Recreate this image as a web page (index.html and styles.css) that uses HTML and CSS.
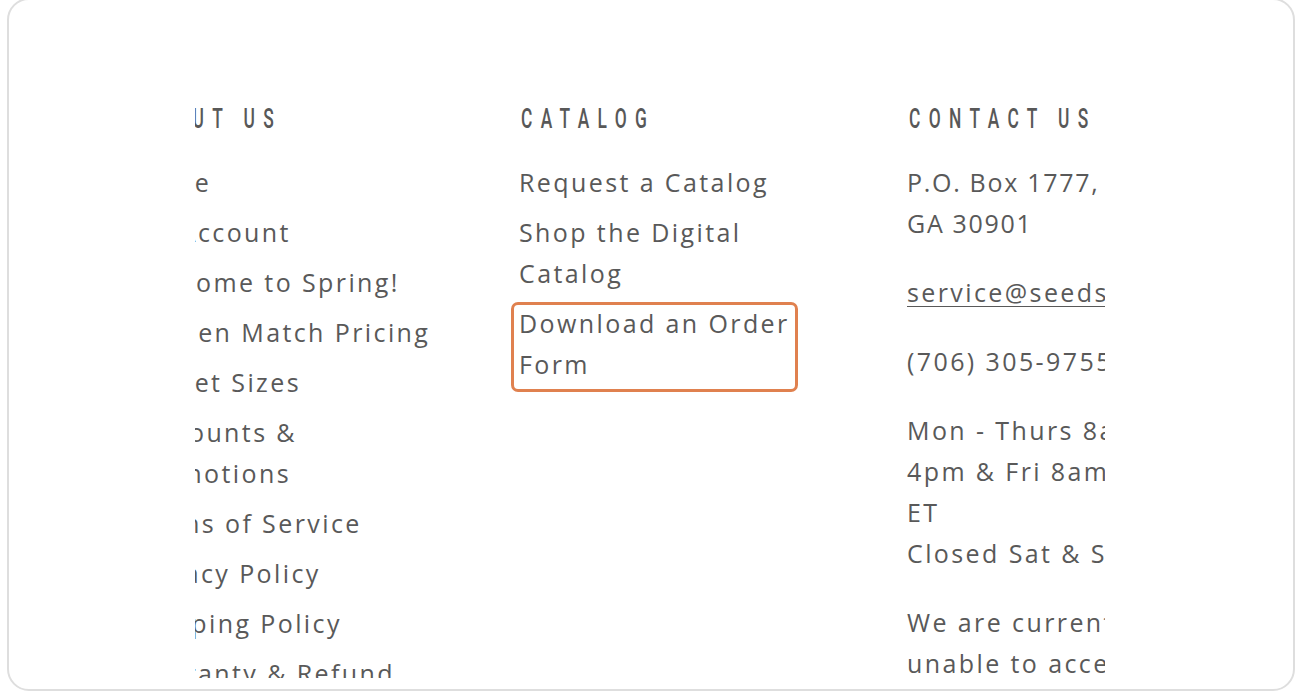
FILE: index.html
```html
<!DOCTYPE html>
<html lang="en">
<head>
    <meta charset="UTF-8">
    <title>Footer</title>
    <link rel="stylesheet" href="styles.css">
</head>
<body>

    <div class="frame">
        <div class="clip">
            <div class="cols">

                <!-- About -->
                <div class="col">
                    <h4>About Us</h4>
                    <ul>
                        <li><a href="#">Home</a></li>
                        <li><a href="#">My Account</a></li>
                        <li><a href="#">Welcome to Spring!</a></li>
                        <li><a href="#">Garden Match Pricing</a></li>
                        <li><a href="#">Packet Sizes</a></li>
                        <li><a href="#">Discounts &amp; Promotions</a></li>
                        <li><a href="#">Terms of Service</a></li>
                        <li><a href="#">Privacy Policy</a></li>
                        <li><a href="#">Shipping Policy</a></li>
                        <li><a href="#">Warranty &amp; Refund Policy</a></li>
                    </ul>
                </div>

                <!-- Catalog -->
                <div class="col">
                    <h4>Catalog</h4>
                    <ul>
                        <li><a href="#">Request a Catalog</a></li>
                        <li><a href="#">Shop the Digital Catalog</a></li>
                        <li class="marked"><a href="#">Download an Order Form</a></li>
                    </ul>
                </div>

                <!-- Contact -->
                <div class="col">
                    <h4>Contact Us</h4>
                    <p class="addr">P.O. Box 1777, Augusta,<br>GA 30901</p>
                    <p><a class="mail" href="#">service@seedsforthesouth.com</a></p>
                    <p>(706) 305-9755</p>
                    <p>Mon - Thurs 8am - 4pm &amp; Fri 8am - 12pm ET<br>Closed Sat &amp; Sun</p>
                    <p>We are currently unable to accept phone orders.</p>
                </div>

            </div>
        </div>
    </div>

</body>
</html>
```

FILE: styles.css
```css
* {
    margin: 0;
    padding: 0;
    box-sizing: border-box;
}

body {
    background-color: #fff;
    font-family: "Open Sans", "Lato", sans-serif;
    color: #595959;
}

.frame {
    margin: -2px 7px 0;
    height: 693px;
    border: 2px solid #dedede;
    border-radius: 22px;
    background-color: #fff;
}

.clip {
    margin-left: 186px;
    width: 910px;
    height: 678px;
    overflow: hidden;
}

.cols {
    display: grid;
    grid-template-columns: 310px 310px 310px;
    column-gap: 78px;
    margin-left: -64px;
    padding-top: 104px;
}

h4 {
    font-family: "Roboto", "DejaVu Sans", sans-serif;
    font-weight: 500;
    font-size: 28px;
    letter-spacing: 13.5px;
    text-transform: uppercase;
    color: #585858;
    line-height: 30px;
    white-space: nowrap;
    transform: scaleX(0.62);
    transform-origin: left center;
    margin: 0 0 28px 2px;
}

ul {
    list-style: none;
}

li {
    margin-bottom: 9px;
}

a {
    color: inherit;
    text-decoration: none;
}

.col ul a,
.col p {
    font-size: 25px;
    line-height: 41px;
    letter-spacing: 2.4px;
}

.col p {
    margin-bottom: 28px;
}

.col .addr {
    letter-spacing: 1.7px;
    white-space: nowrap;
}

.mail {
    text-decoration: underline;
    text-underline-offset: 4px;
    text-decoration-thickness: 1px;
}

.marked {
    position: relative;
}

.marked::after {
    content: "";
    position: absolute;
    left: -8px;
    top: -1px;
    width: 281px;
    height: 84px;
    border: 3px solid #e0814f;
    border-radius: 7px;
}
```
